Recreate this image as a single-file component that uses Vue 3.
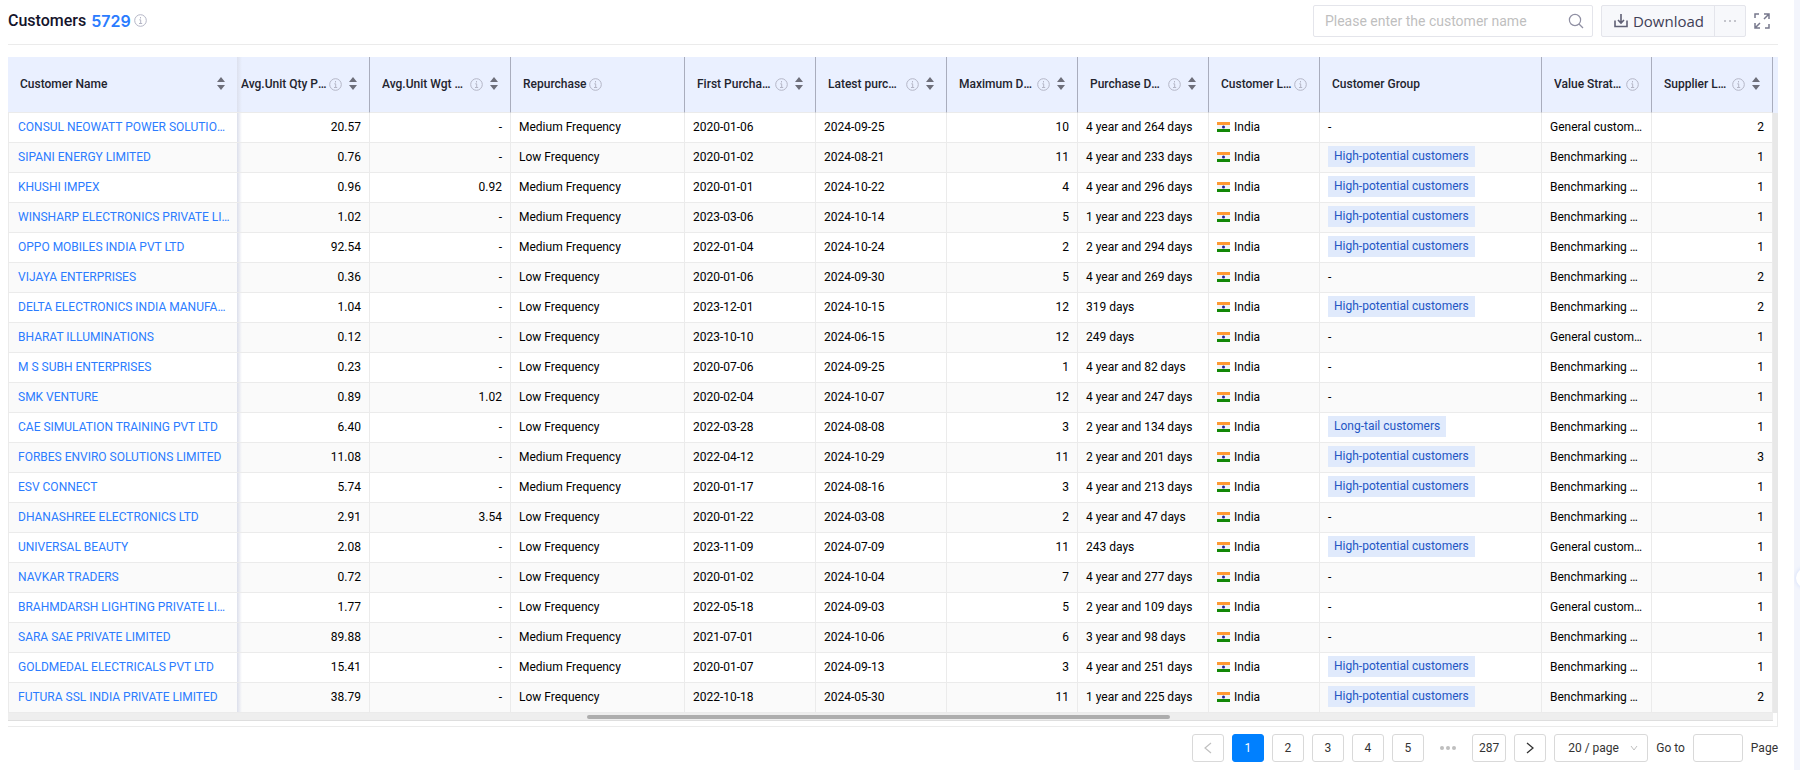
<template>
  <div class="page">
    <section class="panel">
      <header class="toolbar">
        <h1 class="title">Customers</h1>
        <span class="total">5729</span>
        <InfoIcon />
        <div class="actions">
          <div class="search">
            <input v-model="keyword" type="text" aria-label="Customer name" placeholder="Please enter the customer name" />
            <button class="icon-btn" type="button" aria-label="Search">
              <svg width="16" height="16" viewBox="0 0 16 16" fill="none" stroke="#8f8fa3" stroke-width="1.2">
                <circle cx="7" cy="7" r="5.6" />
                <path d="M11 11l4 4" />
              </svg>
            </button>
          </div>
          <div class="download">
            <button type="button" class="download-main">
              <svg width="14" height="14" viewBox="0 0 14 14" fill="none" stroke="#5f6075" stroke-width="1.6">
                <path d="M1 6.5v6h12v-6M7 0v9M4 6l3 3 3-3" />
              </svg>
              Download
            </button>
            <button type="button" class="download-more" aria-label="More">
              <svg width="14" height="4" viewBox="0 0 14 4" fill="#c4c5cc">
                <rect x="1" y="1" width="2" height="2" />
                <rect x="6" y="1" width="2" height="2" />
                <rect x="11" y="1" width="2" height="2" />
              </svg>
            </button>
          </div>
          <button class="icon-btn" type="button" aria-label="Full screen">
            <svg width="16" height="16" viewBox="0 0 16 16" fill="none" stroke="#77788c" stroke-width="1.5">
              <path d="M1 5V1h4M10 1h5v5M15 11v4h-4M6 15H1v-5M15 1l-5 5M1 15l5-5" />
            </svg>
          </button>
        </div>
      </header>

      <div class="grid">
        <table>
          <colgroup>
            <col v-for="c in columns" :key="c.key" :style="{ width: c.width + 'px' }" />
          </colgroup>
          <thead>
            <tr>
              <th v-for="c in columns" :key="c.key" :class="c.key">
                <div class="head">
                  <span class="label" :class="{ grow: c.sort }">{{ c.label }}</span>
                  <InfoIcon v-if="c.info" />
                  <button v-if="c.sort" class="icon-btn sort" type="button" :aria-label="'Sort by ' + c.label">
                    <svg width="8" height="13" viewBox="0 0 8 13" fill="#6e6f7a">
                      <path d="M4 0l4 5H0zM4 13l4-5H0z" />
                    </svg>
                  </button>
                </div>
              </th>
            </tr>
          </thead>
          <tbody>
            <tr v-for="r in rows" :key="r.name">
              <td class="name"><a href="#">{{ r.name }}</a></td>
              <td class="num">{{ r.qty }}</td>
              <td class="num">{{ r.wgt }}</td>
              <td>{{ r.freq }} Frequency</td>
              <td>{{ r.first }}</td>
              <td>{{ r.latest }}</td>
              <td class="num">{{ r.max }}</td>
              <td>{{ r.duration }}</td>
              <td>
                <span class="country">
                  <svg width="13" height="10" viewBox="0 0 13 10">
                    <rect width="13" height="10" fill="#f4f4f6" />
                    <rect width="13" height="3" fill="#ff9933" />
                    <rect y="7" width="13" height="3" fill="#128807" />
                    <circle cx="6.5" cy="5" r="1.5" fill="#22229a" />
                  </svg>
                  India
                </span>
              </td>
              <td>
                <span v-if="r.group" class="tag">{{ r.group }} customers</span>
                <template v-else>-</template>
              </td>
              <td>{{ r.value }}</td>
              <td class="num">{{ r.suppliers }}</td>
            </tr>
          </tbody>
        </table>
        <div class="rail"></div>
      </div>
      <div class="scroll-row">
        <div class="scrollbar"><div class="thumb"></div></div>
      </div>

      <nav class="pager" aria-label="Pagination">
        <button type="button" class="page-btn" disabled aria-label="Previous page">
          <svg width="8" height="12" viewBox="0 0 8 12" fill="none" stroke="#c0c0c0" stroke-width="1.2"><path d="M7 1L1 6l6 5" /></svg>
        </button>
        <button
          v-for="n in 5"
          :key="n"
          type="button"
          class="page-btn"
          :class="{ active: n === page }"
          @click="page = n"
        >{{ n }}</button>
        <span class="dots">
          <svg width="16" height="4" viewBox="0 0 16 4" fill="#bfbfbf">
            <circle cx="2" cy="2" r="2" /><circle cx="8" cy="2" r="2" /><circle cx="14" cy="2" r="2" />
          </svg>
        </span>
        <button type="button" class="page-btn" :class="{ active: page === 287 }" @click="page = 287">287</button>
        <button type="button" class="page-btn" aria-label="Next page" @click="page++">
          <svg width="8" height="12" viewBox="0 0 8 12" fill="none" stroke="#333" stroke-width="1.3"><path d="M1 1l6 5-6 5" /></svg>
        </button>
        <div class="size">
          <select v-model="pageSize" aria-label="Rows per page">
            <option value="20">20 / page</option>
            <option value="50">50 / page</option>
            <option value="100">100 / page</option>
          </select>
          <svg width="8" height="6" viewBox="0 0 8 6" fill="none" stroke="#bfbfbf"><path d="M1 1l3 4 3-4" /></svg>
        </div>
        <label for="goto">Go to</label>
        <input id="goto" v-model="target" class="goto" type="text" />
        <span>Page</span>
      </nav>
    </section>
    <aside class="edge"><span class="handle"></span></aside>
  </div>
</template>

<script setup>
import { h, ref } from 'vue';

const keyword = ref('');
const page = ref(1);
const pageSize = ref('20');
const target = ref('');

const InfoIcon = () =>
  h('svg', { class: 'info', width: 13, height: 13, viewBox: '0 0 13 13', fill: 'none', stroke: '#b4b6c6' }, [
    h('circle', { cx: 6.5, cy: 6.5, r: 5.8 }),
    h('path', { d: 'M6.5 3v1.5M5.3 5.8h1.4V9.5M5 9.5h3.2' }),
  ]);

const columns = [
  { key: 'name', label: 'Customer Name', width: 229, sort: true },
  { key: 'qty', label: 'Avg.Unit Qty Price', width: 133, info: true, sort: true },
  { key: 'wgt', label: 'Avg.Unit Wgt Price', width: 141, info: true, sort: true },
  { key: 'freq', label: 'Repurchase', width: 174, info: true },
  { key: 'first', label: 'First Purchase Date', width: 131, info: true, sort: true },
  { key: 'latest', label: 'Latest purchase Date', width: 131, info: true, sort: true },
  { key: 'max', label: 'Maximum Duration', width: 131, info: true, sort: true },
  { key: 'duration', label: 'Purchase Duration', width: 131, info: true, sort: true },
  { key: 'location', label: 'Customer Location', width: 111, info: true },
  { key: 'group', label: 'Customer Group', width: 222 },
  { key: 'value', label: 'Value Strategy', width: 110, info: true },
  { key: 'suppliers', label: 'Supplier Level', width: 121, info: true, sort: true },
];

const HIGH = 'High-potential';
const GEN = 'General customers';
const BEN = 'Benchmarking customers';

const rows = [
  ['CONSUL NEOWATT POWER SOLUTIONS PRIVATE LIMITED', '20.57', '-', 'Medium', '2020-01-06', '2024-09-25', 10, '4 year and 264 days', '', GEN, 2],
  ['SIPANI ENERGY LIMITED', '0.76', '-', 'Low', '2020-01-02', '2024-08-21', 11, '4 year and 233 days', HIGH, BEN, 1],
  ['KHUSHI IMPEX', '0.96', '0.92', 'Medium', '2020-01-01', '2024-10-22', 4, '4 year and 296 days', HIGH, BEN, 1],
  ['WINSHARP ELECTRONICS PRIVATE LIMITED', '1.02', '-', 'Medium', '2023-03-06', '2024-10-14', 5, '1 year and 223 days', HIGH, BEN, 1],
  ['OPPO MOBILES INDIA PVT LTD', '92.54', '-', 'Medium', '2022-01-04', '2024-10-24', 2, '2 year and 294 days', HIGH, BEN, 1],
  ['VIJAYA ENTERPRISES', '0.36', '-', 'Low', '2020-01-06', '2024-09-30', 5, '4 year and 269 days', '', BEN, 2],
  ['DELTA ELECTRONICS INDIA MANUFACTURING', '1.04', '-', 'Low', '2023-12-01', '2024-10-15', 12, '319 days', HIGH, BEN, 2],
  ['BHARAT ILLUMINATIONS', '0.12', '-', 'Low', '2023-10-10', '2024-06-15', 12, '249 days', '', GEN, 1],
  ['M S SUBH ENTERPRISES', '0.23', '-', 'Low', '2020-07-06', '2024-09-25', 1, '4 year and 82 days', '', BEN, 1],
  ['SMK VENTURE', '0.89', '1.02', 'Low', '2020-02-04', '2024-10-07', 12, '4 year and 247 days', '', BEN, 1],
  ['CAE SIMULATION TRAINING PVT LTD', '6.40', '-', 'Low', '2022-03-28', '2024-08-08', 3, '2 year and 134 days', 'Long-tail', BEN, 1],
  ['FORBES ENVIRO SOLUTIONS LIMITED', '11.08', '-', 'Medium', '2022-04-12', '2024-10-29', 11, '2 year and 201 days', HIGH, BEN, 3],
  ['ESV CONNECT', '5.74', '-', 'Medium', '2020-01-17', '2024-08-16', 3, '4 year and 213 days', HIGH, BEN, 1],
  ['DHANASHREE ELECTRONICS LTD', '2.91', '3.54', 'Low', '2020-01-22', '2024-03-08', 2, '4 year and 47 days', '', BEN, 1],
  ['UNIVERSAL BEAUTY', '2.08', '-', 'Low', '2023-11-09', '2024-07-09', 11, '243 days', HIGH, GEN, 1],
  ['NAVKAR TRADERS', '0.72', '-', 'Low', '2020-01-02', '2024-10-04', 7, '4 year and 277 days', '', BEN, 1],
  ['BRAHMDARSH LIGHTING PRIVATE LIMITED', '1.77', '-', 'Low', '2022-05-18', '2024-09-03', 5, '2 year and 109 days', '', GEN, 1],
  ['SARA SAE PRIVATE LIMITED', '89.88', '-', 'Medium', '2021-07-01', '2024-10-06', 6, '3 year and 98 days', '', BEN, 1],
  ['GOLDMEDAL ELECTRICALS PVT LTD', '15.41', '-', 'Medium', '2020-01-07', '2024-09-13', 3, '4 year and 251 days', HIGH, BEN, 1],
  ['FUTURA SSL INDIA PRIVATE LIMITED', '38.79', '-', 'Low', '2022-10-18', '2024-05-30', 11, '1 year and 225 days', HIGH, BEN, 2],
].map(([name, qty, wgt, freq, first, latest, max, duration, group, value, suppliers]) => ({
  name, qty, wgt, freq, first, latest, max, duration, group, value, suppliers,
}));
</script>

<style>
body {
  background: #fff;
}
</style>

<style scoped>
.page {
  display: flex;
  min-height: 100vh;
  font-family: Roboto, 'Liberation Sans', sans-serif;
  font-size: 12px;
  color: #000;
}

* {
  box-sizing: border-box;
}

button,
input,
select {
  font: inherit;
  color: inherit;
}

.panel {
  flex: 1;
  min-width: 0;
  padding: 0 16px 8px 8px;
}

.edge {
  position: relative;
  width: 6px;
  background: #f3f5fc;
  overflow: hidden;
}

.handle {
  position: absolute;
  top: 75%;
  left: 2px;
  width: 20px;
  height: 20px;
  margin-top: -10px;
  border-radius: 50%;
  background: #fff;
  box-shadow: 0 0 4px #cfdcfa;
}

.toolbar {
  display: flex;
  align-items: center;
  height: 45px;
  padding-bottom: 3px;
  border-bottom: 1px solid #ebebeb;
}

.title {
  margin: 0 5px 0 0;
  font-size: 16px;
  font-weight: 500;
  color: #14142b;
}

.total {
  margin-right: 3px;
  font-family: Inter, sans-serif;
  font-size: 16px;
  font-weight: 600;
  color: #2b7cff;
}

.info {
  flex: none;
}

.actions {
  display: flex;
  align-items: center;
  gap: 8px;
  margin-left: auto;
  padding-right: 8px;
}

.icon-btn {
  display: flex;
  padding: 0;
  border: none;
  background: none;
  cursor: pointer;
}

.search {
  display: flex;
  align-items: center;
  width: 280px;
  height: 32px;
  padding: 0 8px 0 11px;
  border: 1px solid #e4e5eb;
  border-radius: 2px;
}

.search input {
  flex: 1;
  min-width: 0;
  padding: 0;
  border: none;
  outline: none;
  font-size: 14px;
}

.search input::placeholder {
  color: #bfbfbf;
}

.download {
  display: flex;
  height: 32px;
  border: 1px solid #e4e5eb;
  border-radius: 2px;
  background: #f7f8fb;
}

.download button {
  display: flex;
  align-items: center;
  border: none;
  background: none;
  cursor: pointer;
}

.download .download-main {
  gap: 5px;
  padding: 0 10px 0 12px;
  border-right: 1px solid #e4e5eb;
  font-family: 'Open Sans', sans-serif;
  font-size: 15px;
  color: #3f4056;
}

.download .download-more {
  padding: 0 8px;
}

.grid {
  display: flex;
  margin-top: 12px;
}

table {
  flex: 1;
  width: 100%;
  min-width: 0;
  table-layout: fixed;
  border-collapse: separate;
  border-spacing: 0;
}

th {
  height: 56px;
  padding: 0 12px 2px;
  border-right: 1px solid #a9adbd;
  border-bottom: 1px solid #ebebeb;
  background: #eaf0ff;
  font-weight: 500;
  text-align: left;
  color: #23242e;
}

th.name {
  border-right: none;
}

th.qty {
  padding-left: 4px;
}

.head {
  display: flex;
  align-items: center;
}

.label {
  overflow: hidden;
  white-space: nowrap;
  text-overflow: ellipsis;
}

.label.grow {
  flex: 1;
}

.latest .label {
  margin-right: 4px;
}

.head .info {
  margin: 2px 0 0 2px;
}

.sort {
  margin-left: 7px;
}

td {
  height: 30px;
  padding: 0 8px 2px;
  border-right: 1px solid #ebebeb;
  border-bottom: 1px solid #ebebeb;
  overflow: hidden;
  white-space: nowrap;
  text-overflow: ellipsis;
}

tbody tr:nth-child(even) td {
  background: #fafafa;
}

td.name {
  padding-left: 9px;
  padding-right: 6px;
  border-left: 1px solid #ebebeb;
  border-right: none;
  color: #2b7cff;
}

th.qty {
  background: linear-gradient(to right, #dde1ee, #eaf0ff 5px);
}

tbody td:nth-child(2),
tbody tr:nth-child(even) td:nth-child(2) {
  background-image: linear-gradient(to right, #dcdfeb, transparent 5px);
}

a {
  color: #2b7cff;
  text-decoration: none;
}

.num {
  text-align: right;
}

.country {
  display: flex;
  align-items: center;
  gap: 4px;
}

.tag {
  display: inline-block;
  padding: 0 6px;
  line-height: 21px;
  vertical-align: middle;
  background: #e0eafc;
  color: #2456c4;
}

.rail {
  width: 5px;
  border-top: 56px solid #eaf0ff;
  background: #e8e8e8;
}

.scroll-row {
  height: 14px;
  border-right: 1px solid #ebebeb;
  border-bottom: 1px solid #ebebeb;
}

.scrollbar {
  display: flex;
  justify-content: center;
  align-items: center;
  height: 8px;
  margin-right: 4px;
  border-bottom: 1px solid #dedede;
  background: #eee;
}

.thumb {
  width: 33%;
  height: 4px;
  margin-right: 24px;
  border-radius: 2px;
  background: #adadad;
}

.pager {
  display: flex;
  justify-content: flex-end;
  align-items: center;
  gap: 8px;
  margin-top: 7px;
  color: #333;
}

.page-btn {
  display: flex;
  justify-content: center;
  align-items: center;
  min-width: 32px;
  height: 28px;
  padding: 0 6px;
  border: 1px solid #d9d9d9;
  border-radius: 3px;
  background: #fff;
  cursor: pointer;
}

.page-btn.active {
  border-color: #0080ff;
  background: #0080ff;
  color: #fff;
}

.dots {
  display: flex;
  justify-content: center;
  width: 32px;
}

.size {
  position: relative;
  width: 94px;
}

.size select {
  width: 100%;
  height: 28px;
  padding: 0 13px;
  border: 1px solid #d9d9d9;
  border-radius: 3px;
  background: #fff;
  appearance: none;
}

.size svg {
  position: absolute;
  top: 11px;
  right: 10px;
  pointer-events: none;
}

.goto {
  width: 50px;
  height: 28px;
  border: 1px solid #d9d9d9;
  border-radius: 3px;
}
</style>
